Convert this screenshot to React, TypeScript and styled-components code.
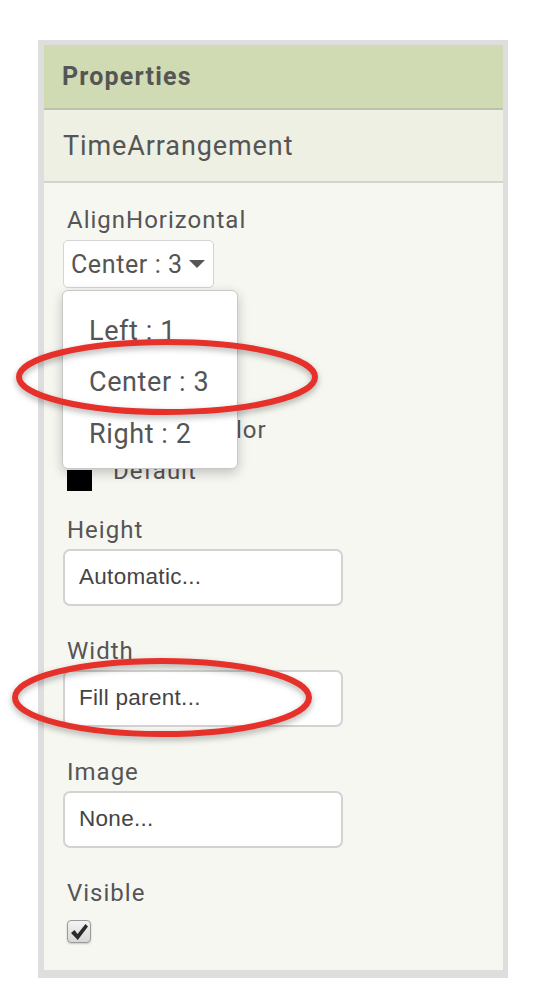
import React from "react";
import styled, { createGlobalStyle } from "styled-components";

const GlobalStyle = createGlobalStyle`
  html, body {
    margin: 0;
    padding: 0;
    background: #ffffff;
  }
  body {
    font-family: Roboto, "Liberation Sans", sans-serif;
    color: #555;
  }
`;

const Page = styled.div`
  width: 538px;
  height: 1004px;
  padding: 40px 0 0 38px;
  box-sizing: border-box;
`;

const Frame = styled.div`
  width: 470px;
  height: 938px;
  box-sizing: border-box;
  padding: 5px 5px 8px 6px;
  background: #dedede;
  display: flex;
`;

const Panel = styled.div`
  flex: 1;
  display: flex;
  flex-direction: column;
  background: #f7f7f2;
`;

const Header = styled.div`
  height: 63px;
  flex-shrink: 0;
  display: flex;
  align-items: center;
  padding-left: 18px;
  background: #d0dbb3;
  border-bottom: 2px solid #bcc2ad;
  font-size: 25px;
  letter-spacing: 1.2px;
  font-weight: 700;
  color: #555;
`;

const ComponentName = styled.div`
  height: 71px;
  flex-shrink: 0;
  display: flex;
  align-items: center;
  padding-left: 19px;
  background: #eef0e3;
  border-bottom: 2px solid #d3d5cc;
  font-size: 27px;
  letter-spacing: 0.9px;
  color: #555;
`;

const Body = styled.div`
  display: flex;
  flex-direction: column;
  padding: 22px 0 0 23px;
`;

const Property = styled.div<{ $gap?: number }>`
  display: flex;
  flex-direction: column;
  align-items: flex-start;
  margin-bottom: ${(p) => p.$gap ?? 30}px;
`;

const Label = styled.div`
  font-size: 24px;
  letter-spacing: 1px;
  line-height: 30px;
  color: #555;
`;

const DropdownWrap = styled.div`
  position: relative;
  margin-top: 5px;
  margin-left: -4px;
`;

const DropdownButton = styled.div`
  height: 48px;
  box-sizing: border-box;
  display: flex;
  align-items: center;
  gap: 6px;
  padding: 0 8px 0 7px;
  background: #ffffff;
  border: 1px solid #d4d4d4;
  border-radius: 5px;
  font-size: 25px;
  letter-spacing: 0.6px;
  color: #555;
`;

const Menu = styled.div`
  position: absolute;
  top: calc(100% + 2px);
  left: -1px;
  width: 176px;
  height: 179px;
  box-sizing: border-box;
  padding-top: 14px;
  background: #ffffff;
  border: 1px solid #c8c8c8;
  border-radius: 6px;
  box-shadow: 0 4px 12px rgba(0, 0, 0, 0.22);
  z-index: 2;
`;

const MenuItem = styled.div`
  height: 51.5px;
  display: flex;
  align-items: center;
  padding-left: 26px;
  font-size: 27px;
  letter-spacing: 0.6px;
  color: #555;
`;

const ColorRow = styled.div`
  display: flex;
  align-items: flex-start;
  gap: 21px;
  margin-top: 8px;
  height: 44px;
`;

const Swatch = styled.div`
  width: 25px;
  height: 21px;
  margin-top: 17px;
  background: #000000;
`;

const ColorName = styled.div`
  font-size: 24px;
  letter-spacing: 1px;
  line-height: 30px;
  margin-top: 3px;
  color: #555;
`;

const FieldWrap = styled.div`
  position: relative;
  margin-top: 4px;
  margin-left: -4px;
`;

const Field = styled.div`
  width: 280px;
  height: 57px;
  box-sizing: border-box;
  display: flex;
  align-items: center;
  padding: 0 0 2px 14px;
  background: #ffffff;
  border: 2px solid #d2d2d2;
  border-radius: 7px;
  font-family: "Liberation Sans", Arial, sans-serif;
  font-size: 22.5px;
  letter-spacing: 0.3px;
  color: #444;
`;

const CheckBox = styled.div`
  width: 24px;
  height: 23px;
  box-sizing: border-box;
  margin-top: 12px;
  display: flex;
  align-items: center;
  justify-content: center;
  border: 1px solid #9a9a9a;
  border-radius: 4px;
  background: linear-gradient(#f4f4f4, #d6d6d6);
  box-shadow: 0 1px 2px rgba(0, 0, 0, 0.2);
`;

const Annotation = styled.svg<{ $left: number; $top: number }>`
  position: absolute;
  left: ${(p) => p.$left}px;
  top: ${(p) => p.$top}px;
  overflow: visible;
  pointer-events: none;
  z-index: 3;
  filter: drop-shadow(0 3px 3px rgba(0, 0, 0, 0.3));
`;

const RedRing = ({ left, top, w, h }: { left: number; top: number; w: number; h: number }) => (
  <Annotation $left={left} $top={top} width={w} height={h} viewBox={`0 0 ${w} ${h}`}>
    <ellipse
      cx={w / 2}
      cy={h / 2}
      rx={w / 2 - 3}
      ry={h / 2 - 3}
      fill="none"
      stroke="#e6302a"
      strokeWidth={6}
    />
  </Annotation>
);

const Caret = () => (
  <svg width="16" height="8" viewBox="0 0 16 8">
    <path d="M0 0 L16 0 L8 8 Z" fill="#555" />
  </svg>
);

const Check = () => (
  <svg width="19" height="18" viewBox="0 0 19 18">
    <path
      d="M1 10 L4.5 7 L7.5 11 L15.5 1 L18 3.5 L7.8 17 Z"
      fill="#2a2a2a"
    />
  </svg>
);

const alignOptions = ["Left : 1", "Center : 3", "Right : 2"];

export default function App() {
  return (
    <>
      <GlobalStyle />
      <Page>
        <Frame>
          <Panel>
            <Header>Properties</Header>
            <ComponentName>TimeArrangement</ComponentName>
            <Body>
              <Property $gap={22}>
                <Label>AlignHorizontal</Label>
                <DropdownWrap>
                  <DropdownButton>
                    Center : 3 <Caret />
                  </DropdownButton>
                  <Menu>
                    {alignOptions.map((o) => (
                      <MenuItem key={o}>{o}</MenuItem>
                    ))}
                    <RedRing left={-47} top={48} w={302} h={76} />
                  </Menu>
                </DropdownWrap>
              </Property>

              <Property $gap={22}>
                <Label>AlignVertical</Label>
                <DropdownWrap>
                  <DropdownButton>
                    Top : 1 <Caret />
                  </DropdownButton>
                </DropdownWrap>
              </Property>

              <Property $gap={18}>
                <Label>BackgroundColor</Label>
                <ColorRow>
                  <Swatch />
                  <ColorName>Default</ColorName>
                </ColorRow>
              </Property>

              <Property>
                <Label>Height</Label>
                <FieldWrap>
                  <Field>Automatic...</Field>
                </FieldWrap>
              </Property>

              <Property>
                <Label>Width</Label>
                <FieldWrap>
                  <Field>Fill parent...</Field>
                  <RedRing left={-51} top={-12} w={300} h={79} />
                </FieldWrap>
              </Property>

              <Property>
                <Label>Image</Label>
                <FieldWrap>
                  <Field>None...</Field>
                </FieldWrap>
              </Property>

              <Property>
                <Label>Visible</Label>
                <CheckBox>
                  <Check />
                </CheckBox>
              </Property>
            </Body>
          </Panel>
        </Frame>
      </Page>
    </>
  );
}
